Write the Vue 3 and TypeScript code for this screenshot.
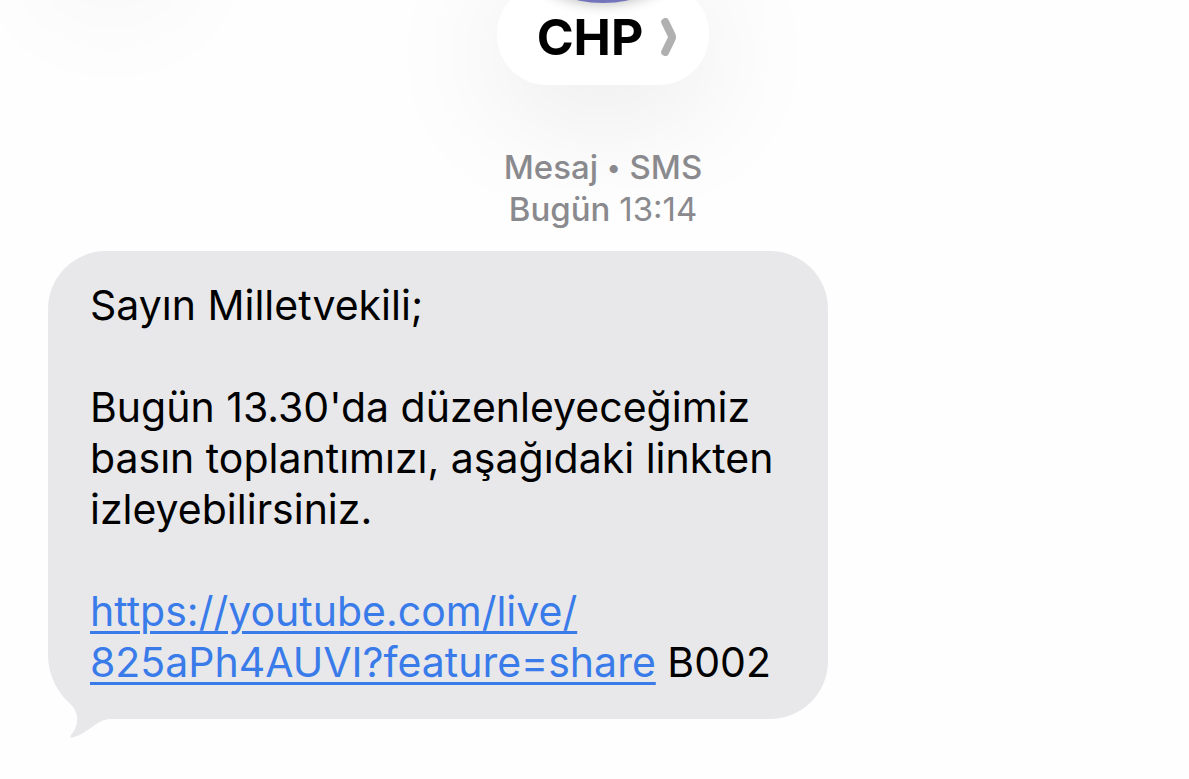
<script setup lang="ts">
interface Message {
  greeting: string
  body: string[]
  href: string
  linkLines: string[]
  code: string
}

const sender = 'CHP'
const message: Message = {
  greeting: 'Sayın Milletvekili;',
  body: ["Bugün 13.30'da düzenleyeceğimiz", 'basın toplantımızı, aşağıdaki linkten', 'izleyebilirsiniz.'],
  href: 'https://youtube.com/live/825aPh4AUVI?feature=share',
  linkLines: ['https://youtube.com/live/', '825aPh4AUVI?feature=share'],
  code: 'B002',
}
</script>

<template>
  <main class="screen">
    <span class="back-shadow" aria-hidden="true"></span>
    <header class="header">
      <button class="contact" type="button">
        <span class="avatar" aria-hidden="true"></span>
        <span class="name">{{ sender }}</span>
        <svg class="chevron" viewBox="0 0 16 38" aria-hidden="true">
          <path d="M4.200 4 L10.500 17 Q11.500 19 10.500 21 L4.200 34" />
        </svg>
      </button>
    </header>

    <div class="stamp">
      <span>Mesaj <span class="dot">•</span> SMS</span>
      <span>Bugün <time class="time">13:14</time></span>
    </div>

    <article class="bubble">
      <p>{{ message.greeting }}</p>
      <p>
        <template v-for="(line, i) in message.body" :key="i"><br v-if="i > 0" />{{ line }}</template>
      </p>
      <p>
        <a :href="message.href"><template v-for="(line, i) in message.linkLines" :key="i"><br v-if="i > 0" />{{ line }}</template></a>
        {{ message.code }}
      </p>
      <svg class="tail" viewBox="0 0 60 60" aria-hidden="true">
        <path d="M13 15 C20 24 31 29 29 43 C28 50 25 53 23 56 C21.500 58.500 23 59 26 58 C41 54 48 40 63 40 L60 10 Z" />
      </svg>
    </article>
  </main>
</template>

<style>
body {
  margin: 0;
  background: #fefefe;
}
</style>

<style scoped>
.screen {
  position: relative;
  min-height: 100vh;
  box-sizing: border-box;
  overflow: hidden;
  font-family: Inter, "Liberation Sans", sans-serif;
  color: #000;
}

.back-shadow {
  position: absolute;
  top: -130px;
  left: 56px;
  width: 112px;
  height: 112px;
  border-radius: 50%;
  box-shadow: 0 20px 130px rgba(0, 0, 0, 0.07);
}

.header {
  display: flex;
  justify-content: center;
  padding-left: 17px;
}

.contact {
  position: relative;
  display: flex;
  align-items: flex-end;
  gap: 18px;
  height: 101px;
  margin: -16px 0 0;
  padding: 0 32px 18px 40px;
  border: 0;
  border-radius: 50px;
  background: #fff;
  box-shadow: 0 20px 130px rgba(0, 0, 0, 0.1);
  font: inherit;
  color: inherit;
}

.avatar {
  position: absolute;
  bottom: 82px;
  left: 50%;
  width: 240px;
  height: 240px;
  margin-left: -120px;
  border-radius: 50%;
  background: #7274bb;
  box-shadow: 0 0 14px rgba(0, 0, 0, 0.3);
  clip-path: inset(0 60px -30px);
}

.name {
  font-size: 50px;
  line-height: 60px;
  font-weight: 700;
}

.chevron {
  width: 16px;
  height: 38px;
  margin-bottom: 11px;
  fill: none;
  stroke: #b0b0b0;
  stroke-width: 8;
  stroke-linecap: round;
}

.stamp {
  position: relative;
  display: flex;
  flex-direction: column;
  align-items: center;
  margin-top: 61px;
  padding-left: 17px;
  font-size: 33px;
  line-height: 42px;
  font-weight: 500;
  color: #8a8a8e;
}

.dot {
  font-size: 26px;
  line-height: 1;
  vertical-align: 2px;
}

.time {
  font-weight: 400;
}

.bubble {
  position: relative;
  width: min(780px, 100% - 96px);
  box-sizing: border-box;
  margin: 21px 48px 60px;
  padding: 29px 42px 31px;
  border-radius: 58px 58px 58px 64px;
  background: #e8e8ea;
  font-size: 41px;
  line-height: 51px;
}

.bubble p {
  margin: 0;
}

.bubble p + p {
  margin-top: 51px;
}

.bubble a {
  color: #3a7bea;
  text-decoration: underline;
  text-decoration-thickness: 3px;
  text-underline-offset: 5px;
}

.tail {
  position: absolute;
  left: 0;
  bottom: -20px;
  width: 60px;
  height: 60px;
  fill: #e8e8ea;
}
</style>
